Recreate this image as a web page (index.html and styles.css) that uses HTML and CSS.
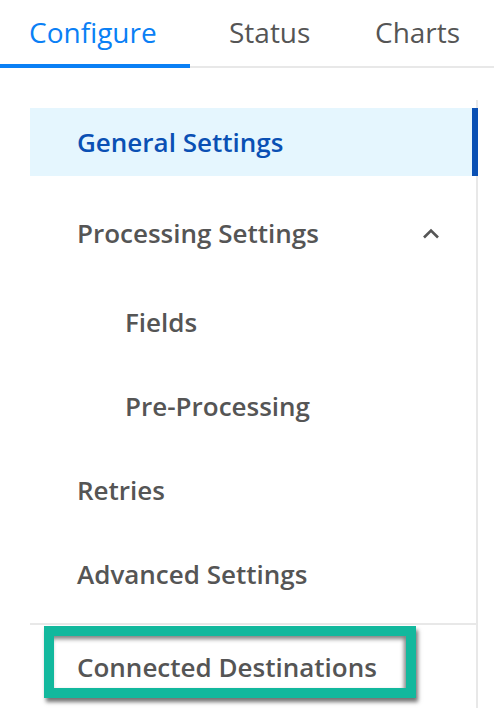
FILE: index.html
```html
<!DOCTYPE html>
<html>
<head>
<meta charset="utf-8">
<link rel="stylesheet" href="styles.css">
</head>
<body>
<div class="tabs">
  <div class="tab tab-configure active">Configure</div>
  <div class="tab tab-status">Status</div>
  <div class="tab tab-charts">Charts</div>
</div>
<nav class="sidenav">
  <div class="item active gap-general">General Settings</div>
  <div class="item group gap-processing">
    <span>Processing Settings</span>
    <svg class="chevron" width="18" height="11" viewBox="0 0 18 11"><path d="M2 9.5 L9 2.5 L16 9.5" fill="none" stroke="#555" stroke-width="2.6"/></svg>
  </div>
  <div class="item sub">Fields</div>
  <div class="item sub">Pre-Processing</div>
  <div class="item">Retries</div>
  <div class="item last">Advanced Settings</div>
  <div class="separator"></div>
  <div class="item connected">Connected Destinations</div>
  <div class="highlight"></div>
</nav>
</body>
</html>
```
FILE: styles.css
```css
html, body {
  margin: 0;
  padding: 0;
  background: #fff;
  overflow: hidden;
}
body {
  width: 494px;
  height: 708px;
  font-family: "Open Sans", "Liberation Sans", sans-serif;
}
.tabs {
  display: flex;
  height: 66px;
  border-bottom: 2px solid #e8e8e8;
}
.tab {
  box-sizing: border-box;
  height: 66px;
  line-height: 64px;
  font-size: 28px;
  color: #555;
  white-space: nowrap;
}
.tab-configure {
  width: 190px;
  padding-left: 29px;
}
.tab-status {
  width: 146px;
  padding-left: 39px;
}
.tab-charts {
  padding-left: 39px;
}
.tab.active {
  color: #0a80f5;
  height: 68px;
  margin-bottom: -2px;
  border-bottom: 4px solid #0a80f5;
}
.sidenav {
  position: relative;
  box-sizing: border-box;
  width: 478px;
  height: 640px;
  margin-top: 32px;
  padding: 8px 0 0 30px;
  border-right: 2px solid #e8e8e8;
  display: flex;
  flex-direction: column;
}
.item {
  box-sizing: border-box;
  height: 68px;
  flex: none;
  display: flex;
  align-items: center;
  justify-content: space-between;
  padding: 0 36px 0 47px;
  margin-bottom: 16px;
  font-size: 26px;
  font-weight: 600;
  color: #555;
  white-space: nowrap;
}
.item.sub {
  padding-left: 95px;
}
.item.active {
  background: #e5f6fe;
  color: #0a50b4;
  margin-right: -2px;
  border-right: 6px solid #0a50b4;
}
.gap-general {
  margin-bottom: 23px;
}
.gap-processing {
  margin-bottom: 21px;
}
.item.last {
  margin-bottom: 15px;
}
.chevron {
  display: block;
}
.separator {
  height: 2px;
  background: #e8e8e8;
  flex: none;
  margin-bottom: 8px;
}
.highlight {
  position: absolute;
  left: 44px;
  top: 526px;
  width: 352px;
  height: 52px;
  border: 10px solid #12b89d;
  box-shadow: 2px 4px 4px rgba(0, 0, 0, 0.55), inset -2px 3px 4px rgba(0, 0, 0, 0.5);
}
```
